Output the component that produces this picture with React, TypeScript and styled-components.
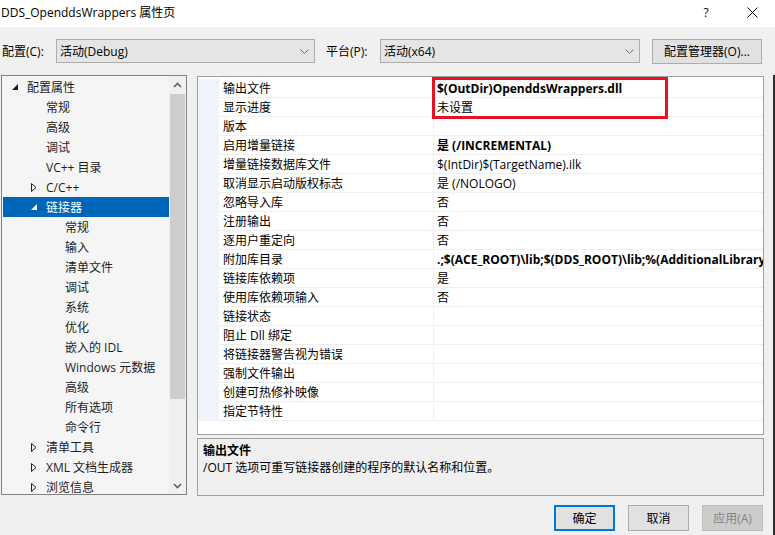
import React from 'react';
import styled, { createGlobalStyle } from 'styled-components';

const FONT = `"Open Sans", "Noto Sans CJK SC", sans-serif`;

const GlobalStyle = createGlobalStyle`
  html, body { margin: 0; padding: 0; }
  body {
    background: #f0f0f0;
    font-family: ${FONT};
    font-size: 12px;
    color: #000;
    overflow: hidden;
  }
  #root { width: 775px; height: 535px; }
  * { box-sizing: border-box; }
`;

const Window = styled.div`
  width: 775px;
  height: 535px;
  display: flex;
  flex-direction: column;
  background: #f0f0f0;
`;

const TitleBar = styled.div`
  height: 27px;
  background: #fff;
  display: flex;
  align-items: flex-start;
  flex-shrink: 0;
`;

const Title = styled.div`
  flex: 1;
  padding: 4px 0 0 1px;
  line-height: 17px;
  white-space: nowrap;
`;

const TitleButton = styled.div`
  width: 46px;
  height: 25px;
  display: flex;
  align-items: center;
  justify-content: center;
  font-size: 12px;
  color: #000;
`;

const Toolbar = styled.div`
  height: 48px;
  display: flex;
  align-items: center;
  padding-left: 2px;
  flex-shrink: 0;
`;

const FieldLabel = styled.div<{ $width: number; $gap?: number }>`
  width: ${(p) => p.$width}px;
  margin-left: ${(p) => p.$gap ?? 0}px;
  white-space: nowrap;
`;

const Combo = styled.div<{ $width: number }>`
  width: ${(p) => p.$width}px;
  height: 24px;
  border: 1px solid #adadad;
  background: #e5e5e5;
  display: flex;
  align-items: center;
  justify-content: space-between;
  padding: 0 5px 0 3px;
  white-space: nowrap;
`;

const ToolButton = styled.div`
  margin-left: 12px;
  width: 110px;
  height: 25px;
  border: 1px solid #adadad;
  background: #e1e1e1;
  display: flex;
  align-items: center;
  justify-content: center;
  white-space: nowrap;
`;

const Body = styled.div`
  flex: 1;
  display: flex;
  align-items: flex-start;
  padding-left: 1px;
  border-right: 2px solid #2f2f2f;
`;

const Tree = styled.div`
  width: 186px;
  height: 420px;
  border: 1px solid #828282;
  background: #f5f5f5;
  display: flex;
  flex-shrink: 0;
`;

const TreeList = styled.div`
  flex: 1;
  padding: 1px 0 0 1px;
  overflow: hidden;
`;

const TreeRow = styled.div<{ $indent: number; $selected?: boolean }>`
  height: 20px;
  display: flex;
  align-items: center;
  padding-left: ${(p) => p.$indent}px;
  background: ${(p) => (p.$selected ? '#0067b8' : 'transparent')};
  color: ${(p) => (p.$selected ? '#fff' : '#1e1e1e')};
  line-height: 19px;
  white-space: nowrap;
`;

const Twisty = styled.div`
  width: 19px;
  height: 20px;
  display: flex;
  align-items: center;
  padding-left: 4px;
  flex-shrink: 0;
`;

const ScrollBar = styled.div`
  width: 17px;
  background: #f0f0f0;
  display: flex;
  flex-direction: column;
  flex-shrink: 0;
`;

const ScrollArrow = styled.div`
  height: 17px;
  display: flex;
  align-items: center;
  justify-content: center;
`;

const Thumb = styled.div<{ $height: number }>`
  height: ${(p) => p.$height}px;
  margin: 1px 1px 0;
  background: #cdcdcd;
`;

const ScrollSpace = styled.div`
  flex: 1;
`;

const RightColumn = styled.div`
  width: 567px;
  margin: 1px 0 0 10px;
  display: flex;
  flex-direction: column;
`;

const Grid = styled.div`
  position: relative;
  height: 359px;
  border: 1px solid #a0a0a0;
  background: #fff;
  padding-top: 2px;
  overflow: hidden;
`;

const PropRow = styled.div`
  display: grid;
  grid-template-columns: 21px 215px 1fr;
  height: 19px;
`;

const Gutter = styled.div`
  background: #f0f3f9;
`;

const LabelCell = styled.div`
  padding: 1px 0 0 4px;
  line-height: 17px;
  border-bottom: 1px solid #efefef;
  border-right: 1px solid #efefef;
  white-space: nowrap;
  overflow: hidden;
`;

const ValueCell = styled.div<{ $bold?: boolean }>`
  padding: 1px 0 0 3px;
  line-height: 17px;
  border-bottom: 1px solid #efefef;
  font-weight: ${(p) => (p.$bold ? 700 : 400)};
  white-space: nowrap;
  overflow: hidden;
`;

const Annotation = styled.div`
  position: absolute;
  top: 0;
  left: 234px;
  width: 236px;
  height: 42px;
  border: 3px solid #e81123;
  pointer-events: none;
`;

const Description = styled.div`
  margin-top: 3px;
  height: 58px;
  border: 1px solid #a0a0a0;
  padding: 3px 5px;
  line-height: 17px;
  white-space: nowrap;
`;

const DescTitle = styled.div`
  font-weight: 700;
`;

const ButtonRow = styled.div`
  margin-top: 9px;
  display: flex;
  justify-content: flex-end;
  gap: 13px;
  padding-right: 1px;
`;

const DialogButton = styled.div<{ $variant?: 'default' | 'disabled' }>`
  width: 61px;
  height: 26px;
  display: flex;
  align-items: center;
  justify-content: center;
  background: ${(p) => (p.$variant === 'disabled' ? '#cccccc' : '#e1e1e1')};
  border: ${(p) =>
    p.$variant === 'default'
      ? '2px solid #0078d7'
      : p.$variant === 'disabled'
      ? '1px solid #bfbfbf'
      : '1px solid #adadad'};
  color: ${(p) => (p.$variant === 'disabled' ? '#838383' : '#000')};
`;

const Chevron = () => (
  <svg width="9" height="5" viewBox="0 0 9 5">
    <polyline points="0.5,0.5 4.5,4.5 8.5,0.5" fill="none" stroke="#6d6d6d" strokeWidth="1" />
  </svg>
);

const CloseIcon = () => (
  <svg width="11" height="11" viewBox="0 0 11 11">
    <path d="M0.5 0.5 L10.5 10.5 M10.5 0.5 L0.5 10.5" stroke="#000" strokeWidth="1" />
  </svg>
);

const ExpandedIcon = ({ color }: { color: string }) => (
  <svg width="6" height="6" viewBox="0 0 6 6">
    <polygon points="6,0 6,6 0,6" fill={color} />
  </svg>
);

const CollapsedIcon = () => (
  <svg width="6" height="9" viewBox="0 0 6 9">
    <path d="M0.5 0.5 L5 4.5 L0.5 8.5 Z" fill="none" stroke="#1e1e1e" strokeWidth="1" />
  </svg>
);

const ScrollChevron = ({ up }: { up?: boolean }) => (
  <svg width="9" height="6" viewBox="0 0 9 6">
    <polyline
      points={up ? '1,5 4.5,1.5 8,5' : '1,1 4.5,4.5 8,1'}
      fill="none"
      stroke="#606060"
      strokeWidth="1.6"
    />
  </svg>
);

type TreeItem = { label: string; level: number; icon?: 'expanded' | 'collapsed'; selected?: boolean };

const treeItems: TreeItem[] = [
  { label: '配置属性', level: 1, icon: 'expanded' },
  { label: '常规', level: 2 },
  { label: '高级', level: 2 },
  { label: '调试', level: 2 },
  { label: 'VC++ 目录', level: 2 },
  { label: 'C/C++', level: 2, icon: 'collapsed' },
  { label: '链接器', level: 2, icon: 'expanded', selected: true },
  { label: '常规', level: 3 },
  { label: '输入', level: 3 },
  { label: '清单文件', level: 3 },
  { label: '调试', level: 3 },
  { label: '系统', level: 3 },
  { label: '优化', level: 3 },
  { label: '嵌入的 IDL', level: 3 },
  { label: 'Windows 元数据', level: 3 },
  { label: '高级', level: 3 },
  { label: '所有选项', level: 3 },
  { label: '命令行', level: 3 },
  { label: '清单工具', level: 2, icon: 'collapsed' },
  { label: 'XML 文档生成器', level: 2, icon: 'collapsed' },
  { label: '浏览信息', level: 2, icon: 'collapsed' },
];

type Prop = { label: string; value?: string; bold?: boolean };

const props: Prop[] = [
  { label: '输出文件', value: '$(OutDir)OpenddsWrappers.dll', bold: true },
  { label: '显示进度', value: '未设置' },
  { label: '版本' },
  { label: '启用增量链接', value: '是 (/INCREMENTAL)', bold: true },
  { label: '增量链接数据库文件', value: '$(IntDir)$(TargetName).ilk' },
  { label: '取消显示启动版权标志', value: '是 (/NOLOGO)' },
  { label: '忽略导入库', value: '否' },
  { label: '注册输出', value: '否' },
  { label: '逐用户重定向', value: '否' },
  { label: '附加库目录', value: '.;$(ACE_ROOT)\\lib;$(DDS_ROOT)\\lib;%(AdditionalLibraryDirectories)', bold: true },
  { label: '链接库依赖项', value: '是' },
  { label: '使用库依赖项输入', value: '否' },
  { label: '链接状态' },
  { label: '阻止 Dll 绑定' },
  { label: '将链接器警告视为错误' },
  { label: '强制文件输出' },
  { label: '创建可热修补映像' },
  { label: '指定节特性' },
];

export default function App() {
  return (
    <>
      <GlobalStyle />
      <Window>
        <TitleBar>
          <Title>DDS_OpenddsWrappers 属性页</Title>
          <TitleButton>?</TitleButton>
          <TitleButton>
            <CloseIcon />
          </TitleButton>
        </TitleBar>
        <Toolbar>
          <FieldLabel $width={54}>配置(C):</FieldLabel>
          <Combo $width={259}>
            <span>活动(Debug)</span>
            <Chevron />
          </Combo>
          <FieldLabel $width={54} $gap={11}>
            平台(P):
          </FieldLabel>
          <Combo $width={260}>
            <span>活动(x64)</span>
            <Chevron />
          </Combo>
          <ToolButton>配置管理器(O)...</ToolButton>
        </Toolbar>
        <Body>
          <Tree>
            <TreeList>
              {treeItems.map((item, i) => (
                <TreeRow key={i} $indent={5 + (item.level - 1) * 19} $selected={item.selected}>
                  <Twisty>
                    {item.icon === 'expanded' && <ExpandedIcon color={item.selected ? '#fff' : '#1e1e1e'} />}
                    {item.icon === 'collapsed' && <CollapsedIcon />}
                  </Twisty>
                  <span>{item.label}</span>
                </TreeRow>
              ))}
            </TreeList>
            <ScrollBar>
              <ScrollArrow>
                <ScrollChevron up />
              </ScrollArrow>
              <Thumb $height={305} />
              <ScrollSpace />
              <ScrollArrow>
                <ScrollChevron />
              </ScrollArrow>
            </ScrollBar>
          </Tree>
          <RightColumn>
            <Grid>
              {props.map((p, i) => (
                <PropRow key={i}>
                  <Gutter />
                  <LabelCell>{p.label}</LabelCell>
                  <ValueCell $bold={p.bold}>{p.value ?? ''}</ValueCell>
                </PropRow>
              ))}
              <Annotation />
            </Grid>
            <Description>
              <DescTitle>输出文件</DescTitle>
              <div>/OUT 选项可重写链接器创建的程序的默认名称和位置。</div>
            </Description>
            <ButtonRow>
              <DialogButton $variant="default">确定</DialogButton>
              <DialogButton>取消</DialogButton>
              <DialogButton $variant="disabled">应用(A)</DialogButton>
            </ButtonRow>
          </RightColumn>
        </Body>
      </Window>
    </>
  );
}
